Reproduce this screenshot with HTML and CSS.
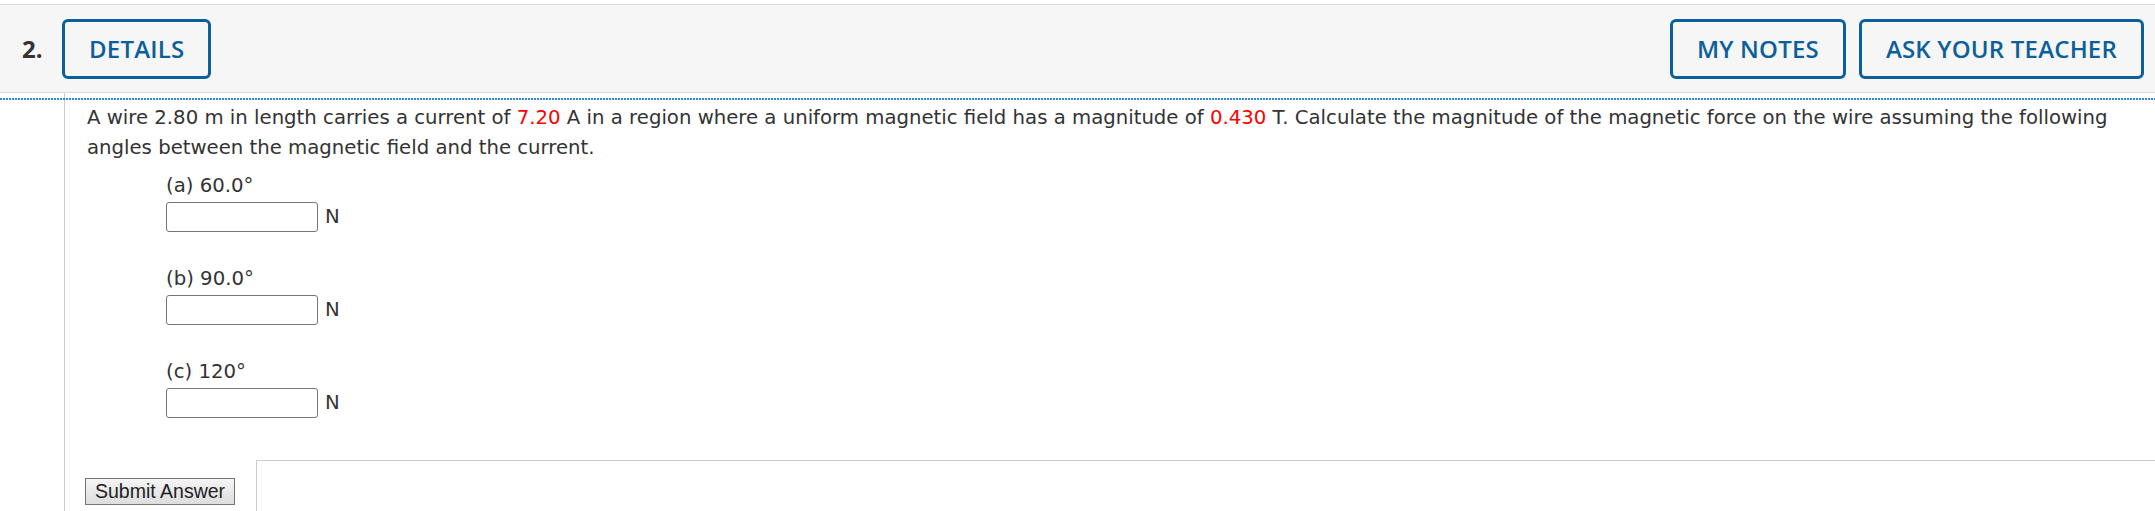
FILE: index.html
```html
<!DOCTYPE html>
<html lang="en">
<head>
<meta charset="utf-8">
<title>Question 2</title>
<link rel="stylesheet" href="styles.css">
</head>
<body>
<div class="page">
  <header class="qhead">
    <span class="qnum">2.</span>
    <button class="hbtn">DETAILS</button>
    <div class="spacer"></div>
    <div class="hactions">
      <button class="hbtn">MY NOTES</button>
      <button class="hbtn">ASK YOUR TEACHER</button>
    </div>
  </header>
  <div class="qbody">
    <div class="gutter"></div>
    <div class="content">
      <p class="prompt">A wire 2.80 m in length carries a current of <span class="val">7.20</span> A in a region where a uniform magnetic field has a magnitude of <span class="val">0.430</span> T. Calculate the magnitude of the magnetic force on the wire assuming the following angles between the magnetic field and the current.</p>
      <div class="parts">
        <div class="part">
          <div class="plabel">(a) 60.0°</div>
          <div class="prow"><input class="ans" type="text"><span class="unit">N</span></div>
        </div>
        <div class="part">
          <div class="plabel">(b) 90.0°</div>
          <div class="prow"><input class="ans" type="text"><span class="unit">N</span></div>
        </div>
        <div class="part">
          <div class="plabel">(c) 120°</div>
          <div class="prow"><input class="ans" type="text"><span class="unit">N</span></div>
        </div>
      </div>
      <div class="submit-row">
        <button class="submit">Submit Answer</button>
        <div class="result-box"></div>
      </div>
    </div>
  </div>
</div>
</body>
</html>
```

FILE: styles.css
```css
html, body {
  margin: 0;
  padding: 0;
  background: #ffffff;
  overflow: hidden;
}

.page {
  padding-top: 4px;
  font-family: "DejaVu Sans", Verdana, sans-serif;
  color: #333333;
}

.qhead {
  display: flex;
  align-items: center;
  height: 87px;
  background: #f6f6f6;
  border-top: 1px solid #dddddd;
  border-bottom: 1px solid #dddddd;
  padding: 0 11px 0 22px;
}

.qnum {
  width: 40px;
  font-family: "Open Sans", "Liberation Sans", sans-serif;
  font-weight: 700;
  font-size: 24px;
  color: #333333;
}

.spacer {
  flex: 1;
}

.hactions {
  display: flex;
  gap: 13px;
}

.hbtn {
  height: 60px;
  padding: 0 24px;
  border: 3px solid #0b5f9b;
  border-radius: 6px;
  background: transparent;
  color: #0b5f9b;
  font-family: "Open Sans", "Liberation Sans", sans-serif;
  font-weight: 600;
  font-size: 24px;
  letter-spacing: 0.2px;
}

.qbody {
  position: relative;
  display: flex;
  min-height: 420px;
}

.qbody::before {
  content: "";
  position: absolute;
  left: 0;
  right: 0;
  top: 5px;
  height: 2px;
  background: repeating-linear-gradient(to right, #2f86d8 0 2px, transparent 2px 3px);
}

.gutter {
  width: 64px;
  flex: none;
  border-right: 1px solid #cccccc;
}

.content {
  flex: 1;
  padding: 10px 0 0 22px;
  font-size: 19.7px;
  line-height: 30px;
}

.prompt {
  margin: 0;
}

.val {
  color: #ff0000;
}

.parts {
  margin: 8px 0 0 79px;
}

.part {
  margin-bottom: 31px;
}

.plabel {
  line-height: 30px;
}

.prow {
  display: flex;
  align-items: center;
  height: 32px;
}

.ans {
  box-sizing: border-box;
  width: 152px;
  height: 30px;
  margin: 0;
  border: 1px solid #767676;
  border-radius: 3px;
  background: #ffffff;
}

.unit {
  margin-left: 7px;
}

.submit-row {
  display: flex;
  align-items: flex-start;
  margin: 41px 0 0 -2px;
}

.submit {
  margin-top: 18px;
  height: 27px;
  padding: 0 9px;
  border: 1px solid #767676;
  border-radius: 0;
  background: linear-gradient(#f5f5f5, #dddddd);
  color: #222222;
  font-family: "Liberation Sans", Arial, sans-serif;
  font-size: 19.5px;
  line-height: 25px;
}

.result-box {
  flex: 1;
  margin-left: 21px;
  margin-right: -4px;
  height: 100px;
  border: 1px solid #cccccc;
}
```
